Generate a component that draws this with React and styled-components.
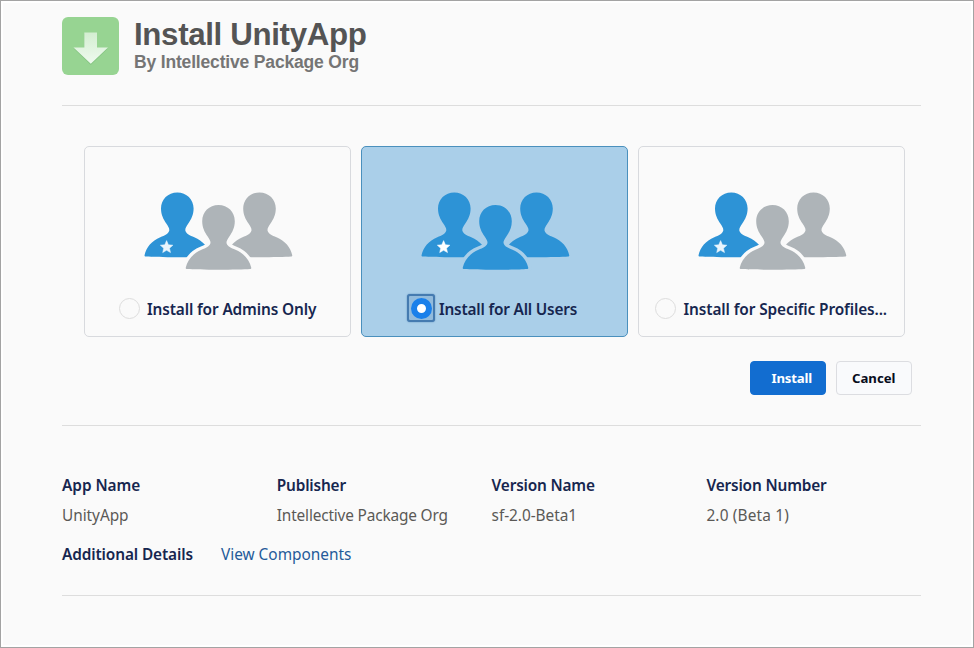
import React, { useState } from "react";
import styled, { createGlobalStyle } from "styled-components";

const GlobalStyle = createGlobalStyle`
  *, *::before, *::after { box-sizing: border-box; }
  body { margin: 0; background: #fff; }
  button, input { font: inherit; }
`;

const sans = `"Noto Sans", "Open Sans", sans-serif`;

const Window = styled.div`
  width: 974px;
  height: 648px;
  border: 1px solid #a3a3a3;
  padding: 2px;
  background: #fff;
  font-family: ${sans};
`;

const Page = styled.main`
  height: 100%;
  padding: 0 50px 0 59px;
  background: #fafafa;
`;

const Header = styled.header`
  display: flex;
  gap: 15px;
  height: 103px;
  padding-top: 14px;
  border-bottom: 1px solid #dddddd;
`;

const PackageIcon = styled.svg`
  display: block;
  width: 57px;
  height: 58px;
`;

const Titles = styled.div`
  font-family: "Liberation Sans", Arial, sans-serif;
  font-weight: 700;
  white-space: nowrap;
`;

const Title = styled.h1`
  margin: 0;
  font-size: 31.3px;
  line-height: 36px;
  letter-spacing: -0.36px;
  color: #545454;
`;

const Byline = styled.p`
  margin: -1px 0 0;
  font-size: 17.5px;
  line-height: 20px;
  letter-spacing: -0.17px;
  color: #757575;
`;

const InstallSection = styled.section`
  height: 320px;
  padding: 40px 9px 0 22px;
  border-bottom: 1px solid #dddddd;
`;

const Options = styled.div`
  display: flex;
  gap: 10px;
`;

const OptionCard = styled.label`
  display: flex;
  flex-direction: column;
  width: 267px;
  height: 191px;
  padding-top: 44px;
  border: 1px solid ${(p) => (p.$selected ? "#4a90bd" : "#d8dade")};
  border-radius: 5px;
  background: ${(p) => (p.$selected ? "#aacfe9" : "#fafafa")};
`;

const PeopleSvg = styled.svg`
  display: block;
  width: 150px;
  height: 80px;
  margin-left: 59px;
`;

const OptionRow = styled.div`
  display: flex;
  align-items: center;
  height: 28px;
  margin-top: 23px;
  padding-left: ${(p) => p.$indent}px;
`;

const Radio = styled.input`
  appearance: none;
  flex: none;
  width: 21px;
  height: 21px;
  margin: 0;
  border: 1px solid #dddddd;
  border-radius: 50%;
  background: #fafafa;

  &:checked {
    border: 6px solid #1a80ea;
    background: #fff;
  }
`;

const FocusFrame = styled.span`
  display: flex;
  flex: none;
  align-items: center;
  justify-content: center;
  width: 28px;
  height: 28px;
  margin-right: 4px;
  border: ${(p) => (p.$active ? "2.5px solid #457bb0" : "2.5px solid transparent")};
  border-radius: 3px;
  background: ${(p) => (p.$active ? "#92bbdc" : "transparent")};
  box-shadow: ${(p) => (p.$active ? "0 0 1.5px #457bb0" : "none")};
`;

const OptionLabel = styled.span`
  margin-top: 3px;
  font-size: 15.4px;
  font-weight: 600;
  line-height: 20px;
  letter-spacing: ${(p) => p.$tracking}px;
  color: #16264f;
  white-space: nowrap;
`;

const Actions = styled.div`
  display: flex;
  justify-content: flex-end;
  gap: 9.5px;
  margin-top: 24px;
`;

const Button = styled.button`
  width: 76.5px;
  height: 34px;
  padding: 0 0 1px ${(p) => (p.$primary ? 8 : 0)}px;
  border: 1px solid ${(p) => (p.$primary ? "#126dd0" : "#dcdde1")};
  border-radius: 4px;
  background: ${(p) => (p.$primary ? "#126dd0" : "#f9fafc")};
  color: ${(p) => (p.$primary ? "#fff" : "#080c1c")};
  font-family: ${sans};
  font-size: 13.2px;
  font-weight: 700;
  line-height: 18px;
  letter-spacing: ${(p) => (p.$primary ? -0.2 : 0)}px;
`;

const Details = styled.section`
  height: 170px;
  padding-top: 50px;
  border-bottom: 1px solid #dddddd;
`;

const FieldGrid = styled.dl`
  display: grid;
  grid-template-columns: repeat(4, 214.8px);
  margin: 0;
`;

const FieldName = styled.dt`
  font-size: 15.4px;
  font-weight: 600;
  line-height: 20px;
  letter-spacing: ${(p) => p.$tracking || 0}px;
  color: #16264f;
  white-space: nowrap;
`;

const FieldValue = styled.dd`
  margin: 10px 0 0;
  font-size: 15.4px;
  line-height: 20px;
  letter-spacing: ${(p) => p.$tracking || 0}px;
  color: #5a5956;
  white-space: nowrap;
`;

const Additional = styled.dl`
  display: flex;
  gap: 28px;
  margin: 19px 0 0;
`;

const ComponentsLink = styled.a`
  font-size: 15.4px;
  line-height: 20px;
  color: #245a99;
  text-decoration: none;
`;

const LinkCell = styled.dd`
  margin: -1px 0 0;
  line-height: 20px;
`;

const BODY =
  "M0 0C9.3 0 16.3 6.8 16.3 16.2C16.3 22.5 13.8 27.2 11 31.2C8.6 34.6 7.7 36.6 8.1 38.3C8.9 41.5 12.6 43 17 44.8C25.6 48.4 31 54.8 32.7 62.6C32.9 63.6 32.5 64 31.6 64.1C21 65 -21 65 -31.6 64.1C-32.5 64 -32.9 63.6 -32.7 62.6C-31 54.8 -25.6 48.4 -17 44.8C-12.6 43 -8.9 41.5 -8.1 38.3C-7.7 36.6 -8.6 34.6 -11 31.2C-13.8 27.2 -16.3 22.5 -16.3 16.2C-16.3 6.8 -9.3 0 0 0Z";

function People({ selected }) {
  const blue = "#2d93d6";
  const others = selected ? blue : "#aeb4b8";
  const gap = selected ? "#aacfe9" : "#fafafa";
  return (
    <PeopleSvg viewBox="0 0 150 80" aria-hidden="true">
      <path d={BODY} transform="translate(33.3 1.4)" fill={blue} />
      <path d={BODY} transform="translate(115.5 1.4)" fill={others} />
      <path
        d={BODY}
        transform="translate(74.5 14)"
        fill={others}
        stroke={gap}
        strokeWidth="6.4"
        paintOrder="stroke"
      />
      <path
        d="M22.6 49.6L24.4 53.7L28.9 54.2L25.5 57.2L26.5 61.6L22.6 59.3L18.7 61.6L19.7 57.2L16.3 54.2L20.8 53.7Z"
        fill={selected ? "#fff" : "#e9f5fd"}
        stroke={selected ? "#fff" : "#e9f5fd"}
        strokeWidth="0.5"
        strokeLinejoin="round"
      />
    </PeopleSvg>
  );
}

const OPTIONS = [
  { id: "admins", label: "Install for Admins Only", indent: 30, tracking: -0.13 },
  { id: "all", label: "Install for All Users", indent: 45, tracking: -0.2 },
  { id: "profiles", label: "Install for Specific Profiles...", indent: 12.5, tracking: -0.11 },
];

const FIELDS = [
  { name: "App Name", value: "UnityApp", nameTracking: -0.05, valueTracking: -0.05 },
  { name: "Publisher", value: "Intellective Package Org", nameTracking: -0.18, valueTracking: -0.17 },
  { name: "Version Name", value: "sf-2.0-Beta1", nameTracking: -0.18, valueTracking: -0.05 },
  { name: "Version Number", value: "2.0 (Beta 1)", nameTracking: -0.16, valueTracking: 0.16 },
];

export default function App() {
  const [choice, setChoice] = useState("all");
  return (
    <Window>
      <GlobalStyle />
      <Page>
        <Header>
          <PackageIcon viewBox="0 0 57 58" aria-hidden="true">
            <defs>
              <linearGradient id="arrow" x1="0" y1="0" x2="0" y2="1">
                <stop offset="0" stopColor="#d3eed1" />
                <stop offset="1" stopColor="#effaef" />
              </linearGradient>
            </defs>
            <rect width="57" height="58" rx="6" fill="#97d492" />
            <path d="M22 16.5H35V31.5H46L28.8 48L11.5 31.5H22Z" fill="#77b877" opacity="0.55" />
            <path d="M22.3 15.5H35V30.5H46L28.8 46.7L11.5 30.5H22.3Z" fill="url(#arrow)" />
          </PackageIcon>
          <Titles>
            <Title>Install UnityApp</Title>
            <Byline>By Intellective Package Org</Byline>
          </Titles>
        </Header>

        <InstallSection>
          <Options>
            {OPTIONS.map((o) => {
              const selected = o.id === choice;
              return (
                <OptionCard key={o.id} $selected={selected}>
                  <People selected={selected} />
                  <OptionRow $indent={o.indent}>
                    <FocusFrame $active={selected}>
                      <Radio
                        type="radio"
                        name="audience"
                        checked={selected}
                        onChange={() => setChoice(o.id)}
                      />
                    </FocusFrame>
                    <OptionLabel $tracking={o.tracking}>{o.label}</OptionLabel>
                  </OptionRow>
                </OptionCard>
              );
            })}
          </Options>
          <Actions>
            <Button $primary>Install</Button>
            <Button>Cancel</Button>
          </Actions>
        </InstallSection>

        <Details>
          <FieldGrid>
            {FIELDS.map((f) => (
              <div key={f.name}>
                <FieldName $tracking={f.nameTracking}>{f.name}</FieldName>
                <FieldValue $tracking={f.valueTracking}>{f.value}</FieldValue>
              </div>
            ))}
          </FieldGrid>
          <Additional>
            <FieldName $tracking={-0.12}>Additional Details</FieldName>
            <LinkCell>
              <ComponentsLink href="#components">View Components</ComponentsLink>
            </LinkCell>
          </Additional>
        </Details>
      </Page>
    </Window>
  );
}
